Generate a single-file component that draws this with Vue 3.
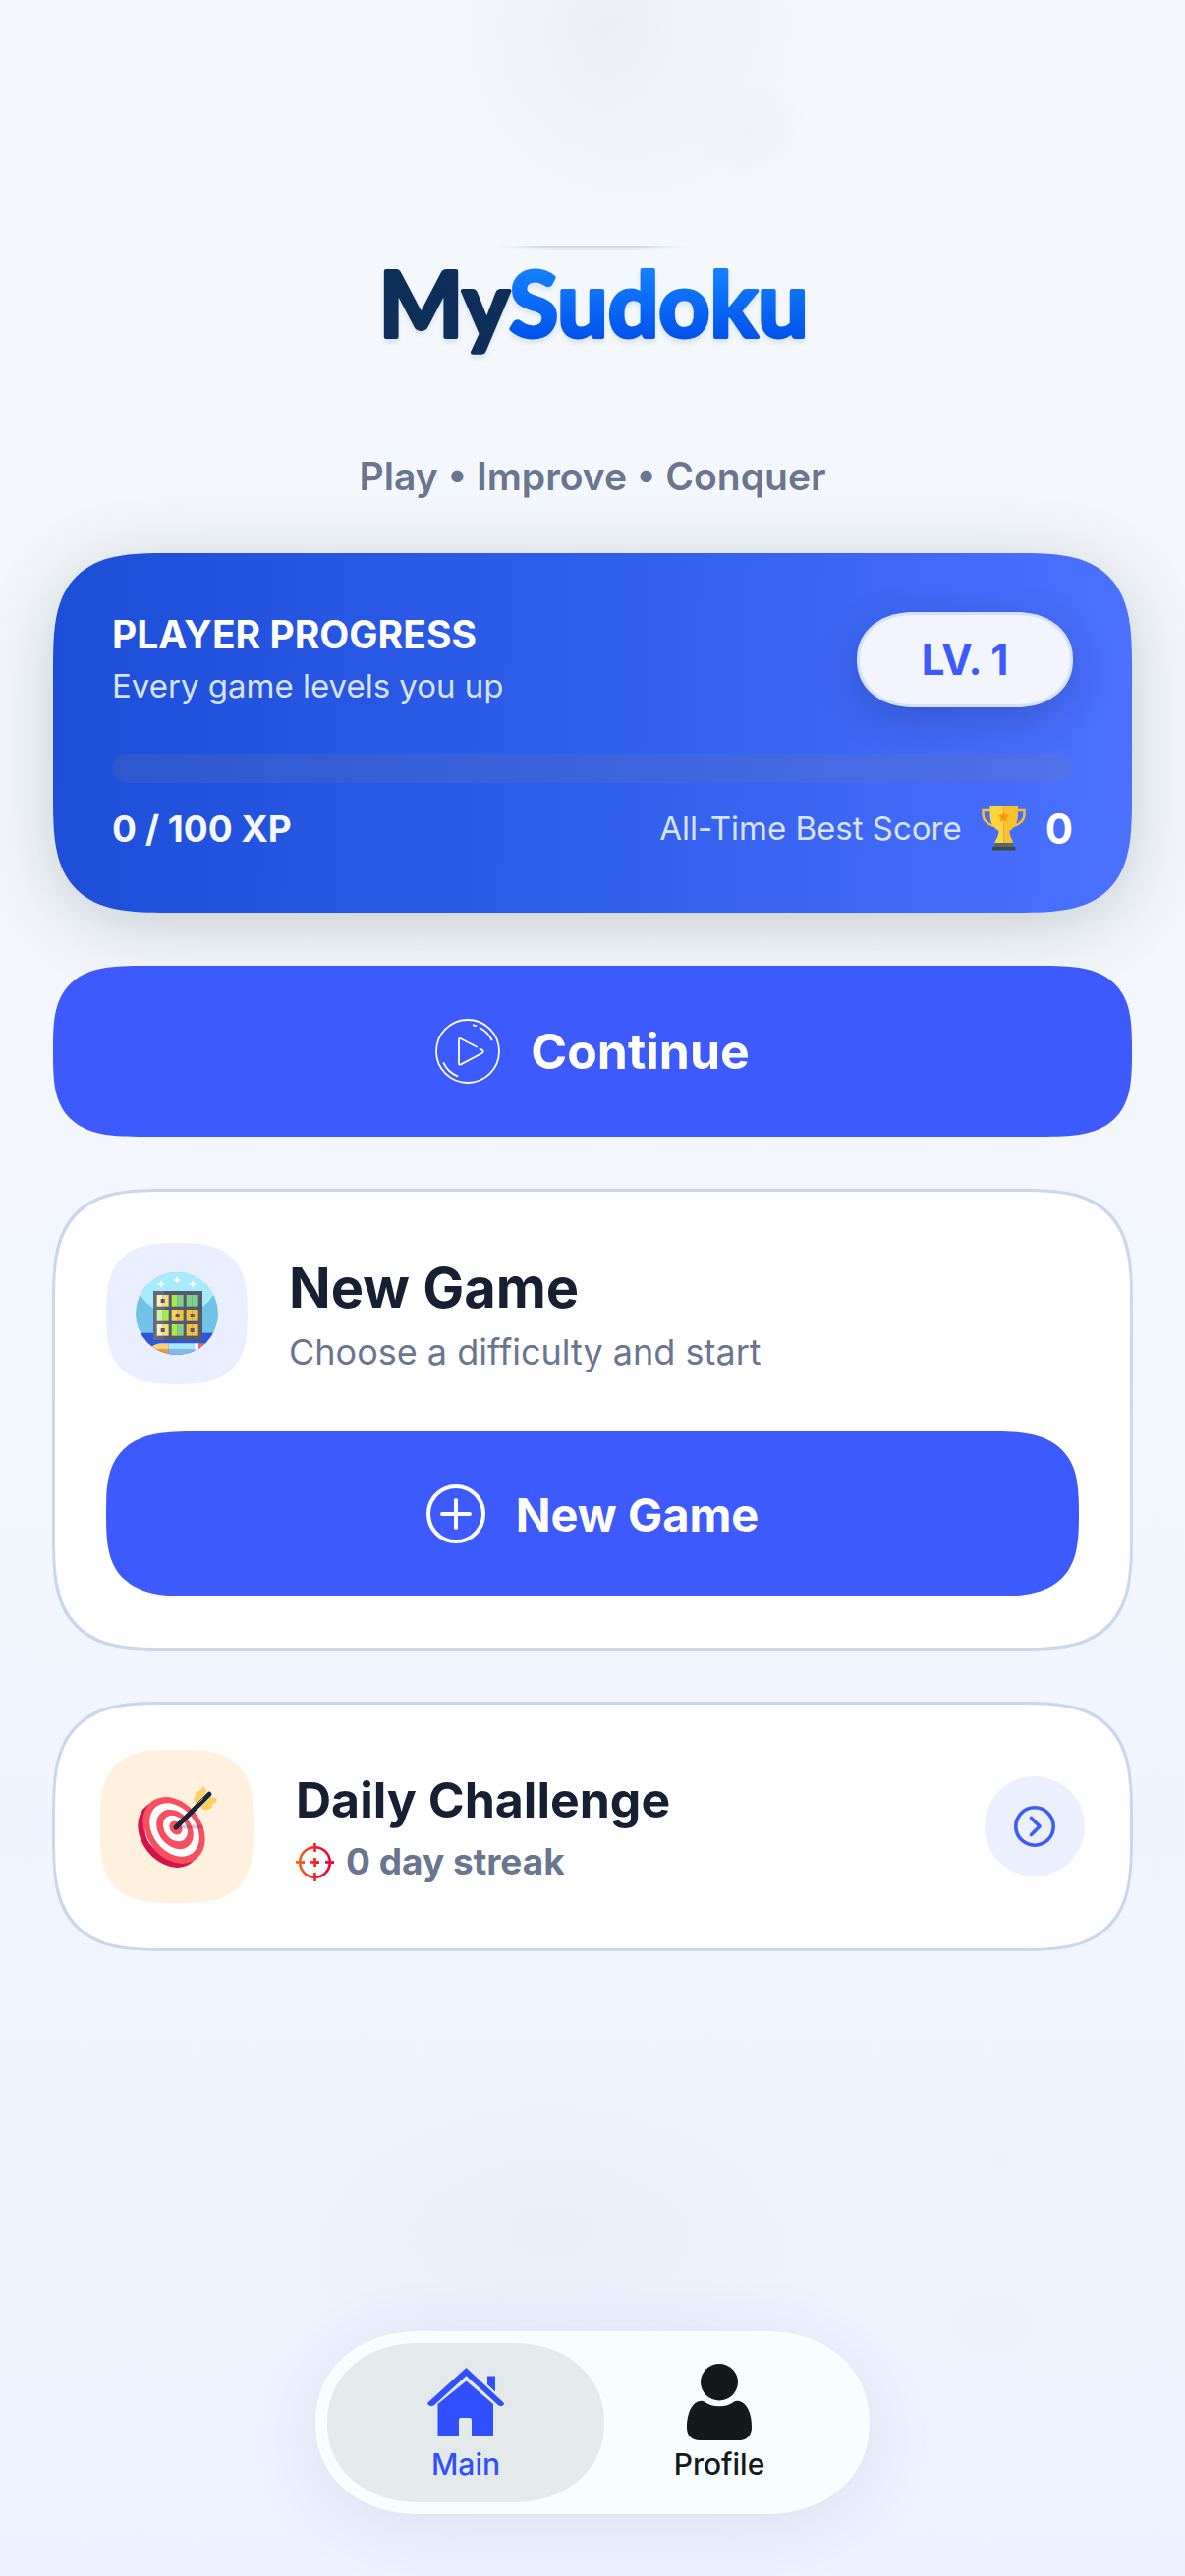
<template>
  <div class="page">
    <header class="hero">
      <h1 class="logo">
        <svg viewBox="0 0 520 166" width="520" height="166" role="img" aria-label="MySudoku">
          <defs>
            <linearGradient id="logo-blue" x1="0" y1="0" x2="0" y2="1">
              <stop offset="0.2" stop-color="#1480ff" />
              <stop offset="0.85" stop-color="#0052ea" />
            </linearGradient>
            <linearGradient id="line-fade" x1="0" y1="0" x2="1" y2="0">
              <stop offset="0" stop-color="#c3cfdc" stop-opacity="0" />
              <stop offset="0.25" stop-color="#c3cfdc" stop-opacity="0.7" />
              <stop offset="0.75" stop-color="#c3cfdc" stop-opacity="0.7" />
              <stop offset="1" stop-color="#c3cfdc" stop-opacity="0" />
            </linearGradient>
          </defs>
          <rect x="164" y="10" width="192" height="2" fill="url(#line-fade)" />
          <rect x="176" y="12" width="168" height="2" fill="url(#line-fade)" opacity="0.4" />
          <text class="logo-text" x="261" y="103" text-anchor="middle">
            <tspan class="logo-my">My</tspan><tspan class="logo-sudoku">Sudoku</tspan>
          </text>
        </svg>
      </h1>
      <p class="tagline">Play • Improve • Conquer</p>
    </header>

    <main class="content">
      <section class="progress-card">
        <div class="progress-head">
          <div>
            <h2 class="progress-title">PLAYER PROGRESS</h2>
            <p class="progress-sub">Every game levels you up</p>
          </div>
          <span class="level">LV. {{ player.level }}</span>
        </div>
        <div
          class="bar"
          role="progressbar"
          aria-label="XP"
          :aria-valuenow="player.xp"
          aria-valuemin="0"
          :aria-valuemax="player.xpGoal"
        >
          <div class="bar-fill" :style="{ width: xpPercent + '%' }"></div>
        </div>
        <div class="progress-foot">
          <span class="xp">{{ player.xp }} / {{ player.xpGoal }} XP</span>
          <div class="best">
            <span class="best-label">All-Time Best Score</span>
            <svg class="trophy" viewBox="0 0 45 46" aria-hidden="true">
              <path d="M9 4H1.500v5c0 6 5 10.500 11 12M36 4h7.500v5c0 6-5 10.500-11 12" fill="none" stroke="#fbc02d" stroke-width="2.400" />
              <path d="M8.500 0h14v38h-9c0-3 4-6 4-12-5-3-9-8-9-16z" fill="#fdd63c" />
              <path d="M22.500 0H37v10c0 8-4 13-8.500 16 0 6 3.500 9 3.500 12h-9.500z" fill="#fbc02d" />
              <path d="M22.500 6l1.700 3.500 3.800.5-2.800 2.700.8 4-3.500-1.900-3.500 1.900.8-4L17 10l3.800-.5z" fill="#ff9800" />
              <path d="M13.500 38H32v4H13.500z" fill="#5b6569" />
              <path d="M11 42h23.500v3.500H11z" fill="#3d4649" />
            </svg>
            <strong class="best-value">{{ player.best }}</strong>
          </div>
        </div>
      </section>

      <button class="primary continue" type="button">
        <svg class="icon-play" viewBox="0 0 66 66" aria-hidden="true">
          <g fill="none" stroke="#fff" stroke-width="1.800" stroke-linecap="round" stroke-linejoin="round">
            <circle cx="33" cy="33" r="32" />
            <path d="M42 28.500L26 20.200q-2-1-2 1.300v23.600q0 2.300 2 1.300L47.500 35q2.400-1.700 0-3.400L45.500 30.800" />
            <path d="M45.500 9.200A27 27 0 0 1 57.500 21.500M38.700 6.400l2.600.7M8.500 45A27 27 0 0 0 22.500 58.300" />
          </g>
        </svg>
        <span>Continue</span>
      </button>

      <section class="card new-game">
        <div class="card-head">
          <div class="tile tile-blue">
            <svg class="icon-board" viewBox="0 0 252 252" aria-hidden="true">
              <defs>
                <clipPath id="board-clip"><circle cx="126" cy="126" r="126" /></clipPath>
              </defs>
              <g clip-path="url(#board-clip)">
                <rect width="252" height="252" fill="#70c2e7" />
                <circle cx="126" cy="0" r="131" fill="#a9ebfe" />
                <rect y="185" width="252" height="67" fill="#2d56da" />
                <path d="M48 228q14-11 30-11h22v17H40z" fill="#fbd27c" />
                <path d="M40 234h60v18H60z" fill="#ef9838" />
                <path d="M100 217h82v17h-82z" fill="#a9ebfe" />
                <path d="M100 234h82v18h-82z" fill="#86b6ea" />
                <path d="M181 217h11v35h-11z" fill="#fff" />
                <path d="M192 217h25v35h-25z" fill="#f2606e" />
                <rect x="54" y="57" width="150" height="150" fill="#545a6b" />
                <path d="M54 57h34v150H54z" fill="#65697f" />
                <g v-for="cell in boardCells" :key="cell.id">
                  <rect :x="cell.x" :y="cell.y" width="18" height="35" :fill="cell.left" />
                  <rect :x="cell.x + 18" :y="cell.y" width="18" height="35" :fill="cell.right" />
                  <rect v-if="cell.dot" :x="cell.x + 12" :y="cell.y + 12" width="12" height="12" fill="#545a6b" />
                </g>
                <path d="M75 27h6v6h6v6h-6v6h-6v-6h-6v-6h6zM123 15h6v6h6v6h-6v6h-6v-6h-6v-6h6zM171 27h6v6h6v6h-6v6h-6v-6h-6v-6h6z" fill="#fff" />
              </g>
            </svg>
          </div>
          <div>
            <h2 class="new-title">New Game</h2>
            <p class="new-sub">Choose a difficulty and start</p>
          </div>
        </div>
        <button class="primary start" type="button">
          <svg class="icon-plus" viewBox="0 0 60 60" aria-hidden="true">
            <g fill="none" stroke="#fff" stroke-width="4" stroke-linecap="round">
              <circle cx="30" cy="30" r="28" />
              <path d="M30 16v28M16 30h28" />
            </g>
          </svg>
          <span>New Game</span>
        </button>
      </section>

      <section class="card daily">
        <div class="tile tile-cream">
          <svg class="icon-target" viewBox="0 0 84 84" aria-hidden="true">
            <ellipse cx="34" cy="50" rx="28" ry="37" transform="rotate(-38 34 50)" fill="#d3134a" />
            <ellipse cx="39" cy="46" rx="28" ry="37" transform="rotate(-38 39 46)" fill="#f74f5f" />
            <ellipse cx="39.500" cy="45.500" rx="22" ry="30" transform="rotate(-38 39.500 45.500)" fill="#fff" />
            <ellipse cx="40" cy="45" rx="16.500" ry="22" transform="rotate(-38 40 45)" fill="#f74f5f" />
            <ellipse cx="40.500" cy="44" rx="11" ry="14.500" transform="rotate(-38 40.500 44)" fill="#fff" />
            <ellipse cx="41" cy="43.500" rx="6" ry="7.500" transform="rotate(-38 41 43.500)" fill="#f74f5f" />
            <path d="M42 42l5-1.500h22v4H44z" fill="#5a3060" opacity="0.25" />
            <path d="M10 43c0 8 3 15 9 21-6-4-10-12-9-21z" fill="#fff" />
            <path d="M69.500.7l2.600 6L62 20l-3.400-7 2-1 .6-5 3.500-1z" fill="#fdd063" />
            <path d="M76.500 12l6 1.500-.5 4-3.500 1.500-.5 4-6.500 2.700-6.500-3.200z" fill="#fdd063" />
            <path d="M41 43L75 9.200" stroke="#1b2439" stroke-width="5" stroke-linecap="round" />
            <path d="M64 18l4.500-4.500" stroke="#cfd5e2" stroke-width="0.800" stroke-linecap="round" />
          </svg>
        </div>
        <div class="daily-text">
          <h2 class="daily-title">Daily Challenge</h2>
          <p class="streak">
            <svg class="icon-aim" viewBox="0 0 39 39" aria-hidden="true">
              <defs>
                <linearGradient id="aim" x1="0" y1="0" x2="39" y2="0" gradientUnits="userSpaceOnUse">
                  <stop offset="0.1" stop-color="#ff5a14" />
                  <stop offset="0.6" stop-color="#fb0a2c" />
                  <stop offset="1" stop-color="#f20034" />
                </linearGradient>
              </defs>
              <g fill="none" stroke="url(#aim)" stroke-width="2.600">
                <circle cx="19.500" cy="19.500" r="15.300" />
                <path d="M19.400 0l.2 9M19.400 30l.2 9M0 19.400l9 .2M30 19.400l9 .2M15 19.400l9 .2M19.400 15l.2 9" />
              </g>
            </svg>
            <span>{{ player.streak }} day streak</span>
          </p>
        </div>
        <button class="go" type="button" aria-label="Open daily challenge">
          <svg viewBox="0 0 42 42" width="42" height="42" aria-hidden="true">
            <g fill="none" stroke="#3d5afe" stroke-width="3.600" stroke-linecap="round" stroke-linejoin="round">
              <circle cx="21" cy="21" r="19.200" />
              <path d="M17.500 12.500L26 21l-8.500 8.500" />
            </g>
          </svg>
        </button>
      </section>
    </main>

    <nav class="tabs">
      <a class="tab active" href="#main" aria-current="page">
        <svg viewBox="0 0 78 78" width="78" height="78" aria-hidden="true">
          <g fill="currentColor">
            <path d="M39.500 4L77 39q2 2-.3 3.500-2.700 1.200-4.700-.4L39.500 12.300 7 42.100q-2 1.600-5 .4-3-1.500-1-3.500z" />
            <path d="M61 12.500h8v16L61 21z" />
            <path d="M39.500 17.500L67 41v31q0 1.500-1.500 1.500H45V57q0-2-2-2h-9q-2 0-2 2v16.500H12q-1.500 0-1.500-1.500V41z" />
          </g>
        </svg>
        <span>Main</span>
      </a>
      <a class="tab" href="#profile">
        <svg viewBox="0 0 66 78" width="66" height="78" aria-hidden="true">
          <g fill="currentColor">
            <ellipse cx="33" cy="18.700" rx="19" ry="18.700" />
            <path d="M15 37.700c4 0 6 5.600 18 5.600s14-5.600 18-5.600c9 0 15 11 15 27 0 8-5 13.300-13 13.300H13C5 78 0 73 0 65c0-16 6-27.300 15-27.300z" />
          </g>
        </svg>
        <span>Profile</span>
      </a>
    </nav>
  </div>
</template>

<script setup>
import { computed, ref } from 'vue'

const player = ref({ level: 1, xp: 0, xpGoal: 100, best: 0, streak: 0 })

const xpPercent = computed(() => (player.value.xp / player.value.xpGoal) * 100)

const cellColors = {
  cream: ['#fdf0b8', '#fbd77e'],
  gold: ['#fbd25f', '#f0c040'],
  amber: ['#f0c040', '#f0c040'],
  lime: ['#a4ea4c', '#7fd08e'],
  mint: ['#cdf3a4', '#a4ea4c'],
  green: ['#7fd08e', '#7fd08e']
}

// numbered cells carry a dot
const board = [
  ['cream', 'lime', 'green'],
  ['mint', 'gold', 'amber'],
  ['cream', 'lime', 'amber']
]
const dotted = ['cream', 'gold', 'amber']

const boardCells = board.flatMap((row, r) =>
  row.map((kind, c) => ({
    id: r + '-' + c,
    x: 65 + c * 45,
    y: 69 + r * 45,
    left: cellColors[kind][0],
    right: cellColors[kind][1],
    dot: dotted.includes(kind)
  }))
)
</script>

<style>
body {
  margin: 0;
  background: #f0f4fe;
}
</style>

<style scoped>
.page {
  display: flex;
  flex-direction: column;
  box-sizing: border-box;
  min-height: 100vh;
  padding: 240px 54px 63px;
  font-family: Inter, "Liberation Sans", sans-serif;
  color: #172033;
  background:
    radial-gradient(ellipse 80px 130px at 610px 30px, rgba(120, 120, 130, 0.03), transparent),
    radial-gradient(ellipse 210px 220px at 640px 20px, rgba(130, 125, 130, 0.05), transparent),
    radial-gradient(ellipse 60px 50px at 765px 135px, rgba(120, 120, 130, 0.03), transparent),
    radial-gradient(ellipse 320px 200px at 560px 2270px, rgba(120, 130, 145, 0.05), transparent),
    radial-gradient(ellipse 70px 60px at 1020px 2200px, rgba(120, 125, 150, 0.02), transparent),
    radial-gradient(ellipse 80px 60px at 1010px 2360px, rgba(120, 125, 150, 0.02), transparent),
    linear-gradient(180deg, #f4f8fc 0%, #f3f7fd 45%, #f0f5fe 78%, #eef2ff 100%);
}

h1,
h2,
p {
  margin: 0;
}

svg {
  display: block;
  flex: none;
}

button {
  border: none;
  padding: 0;
  font-family: inherit;
  cursor: pointer;
}

.hero {
  display: flex;
  flex-direction: column;
  align-items: center;
}

.logo-text {
  font-family: Lato, "Open Sans", sans-serif;
  font-size: 91px;
  font-weight: 700;
  stroke-width: 4px;
  stroke-linejoin: round;
  filter: drop-shadow(0 4px 2px rgba(30, 60, 110, 0.1));
}

.logo-my {
  fill: #0d2f5a;
  stroke: #0d2f5a;
}

.logo-sudoku {
  fill: url(#logo-blue);
  stroke: url(#logo-blue);
}

.tagline {
  margin-top: 55px;
  font-size: 39px;
  line-height: 48px;
  font-weight: 600;
  color: #6a758f;
}

.content {
  display: flex;
  flex-direction: column;
  gap: 54px;
  padding: 54px 0;
}

.progress-card {
  padding: 60px 60px 62px;
  border-radius: 84px;
  color: #fff;
  background: linear-gradient(92deg, #1d4ed8 0%, #2f5eeb 50%, #4c71ff 100%);
  box-shadow: 0 12px 72px rgba(10, 20, 15, 0.19);
}

.progress-head {
  display: flex;
  justify-content: space-between;
  align-items: flex-start;
}

.progress-title {
  font-size: 39px;
  line-height: 46px;
  font-weight: 700;
}

.progress-sub {
  margin-top: 6px;
  font-size: 33px;
  line-height: 46px;
  color: #d8e2fc;
}

.level {
  box-sizing: border-box;
  min-width: 220px;
  padding: 0 56px;
  border: 3px solid #d6e1fc;
  border-radius: 48px;
  text-align: center;
  font-size: 42px;
  line-height: 91px;
  font-weight: 700;
  color: #3d5afe;
  background: #f2f5fd;
  box-shadow: 0 12px 42px rgba(20, 30, 80, 0.24);
}

.bar {
  height: 30px;
  margin-top: 46px;
  overflow: hidden;
  border-radius: 15px;
  background: rgba(110, 125, 160, 0.2);
}

.bar-fill {
  height: 100%;
  border-radius: 15px;
  background: #fff;
}

.progress-foot {
  display: flex;
  justify-content: space-between;
  align-items: center;
  height: 48px;
  margin-top: 22px;
}

.xp {
  font-size: 37px;
  font-weight: 700;
  color: #f4f7ff;
}

.best {
  display: flex;
  align-items: center;
  gap: 20px;
}

.best-label {
  font-size: 33px;
  color: #d8e2fc;
}

.trophy {
  width: 45px;
  height: 46px;
}

.best-value {
  font-size: 42px;
  font-weight: 700;
}

.primary {
  display: flex;
  align-items: center;
  justify-content: center;
  width: 100%;
  font-weight: 700;
  color: #fff;
  background: #3d5afe;
}

.continue {
  gap: 31px;
  height: 174px;
  border-radius: 72px;
  font-size: 50px;
}

.start {
  gap: 31px;
  height: 168px;
  margin-top: 48px;
  border-radius: 66px;
  font-size: 47px;
}

.icon-play {
  width: 66px;
  height: 66px;
}

.icon-plus {
  width: 60px;
  height: 60px;
}

.card {
  border: 2px solid #ccd7ec;
  border-radius: 84px;
  background: #fff;
  box-shadow: 0 0 0 1px #ccd7ec;
}

.new-game {
  padding: 52px;
}

.card-head {
  display: flex;
  align-items: center;
  gap: 42px;
}

.tile {
  display: flex;
  flex: none;
  align-items: center;
  justify-content: center;
  border-radius: 54px;
}

.tile-blue {
  width: 144px;
  height: 144px;
  background: #e9effe;
}

.tile-cream {
  width: 156px;
  height: 156px;
  background: #fff1dd;
}

.icon-board,
.icon-target {
  width: 84px;
  height: 84px;
}

.new-title {
  font-size: 56px;
  line-height: 68px;
  font-weight: 700;
}

.new-sub {
  margin-top: 9px;
  font-size: 36px;
  line-height: 44px;
  color: #6a758f;
}

.daily {
  display: flex;
  align-items: center;
  gap: 43px;
  padding: 46px;
}

.daily-text {
  flex: 1;
}

.daily-title {
  font-size: 50px;
  line-height: 62px;
  font-weight: 700;
}

.streak {
  display: flex;
  align-items: center;
  gap: 12px;
  margin-top: 10px;
  font-size: 37px;
  line-height: 44px;
  font-weight: 700;
  color: #6a758f;
}

.icon-aim {
  width: 39px;
  height: 39px;
}

.go {
  display: flex;
  flex: none;
  align-items: center;
  justify-content: center;
  width: 102px;
  height: 102px;
  border-radius: 50%;
  background: #ecf0fe;
}

.tabs {
  display: flex;
  align-self: center;
  margin-top: auto;
  padding: 12px;
  border-radius: 93px;
  background: #f8fdff;
  box-shadow: 0 12px 72px rgba(60, 60, 100, 0.11);
}

.tab {
  display: flex;
  flex-direction: column;
  align-items: center;
  gap: 6px;
  box-sizing: border-box;
  width: 282px;
  height: 162px;
  padding-top: 21px;
  border-radius: 81px;
  font-size: 30px;
  line-height: 36px;
  font-weight: 500;
  color: #14191c;
  text-decoration: none;
}

.tab + .tab {
  margin-left: -24px;
}

.tab.active {
  color: #304ffe;
  background: #e4e9ec;
}

/* smooth continuous corners where the browser knows them */
@supports (corner-shape: squircle) {
  .progress-card,
  .card {
    border-radius: 116px;
    corner-shape: superellipse(1.6);
  }

  .continue,
  .start {
    border-radius: 92px / 84px;
    corner-shape: superellipse(1.6);
  }

  .tile {
    border-radius: 72px;
    corner-shape: superellipse(1.5);
  }

  .level {
    border-radius: 58px / 48px;
    corner-shape: superellipse(1.1);
  }

  .tabs {
    border-radius: 106px / 93px;
    corner-shape: superellipse(1.1);
  }

  .tab {
    border-radius: 94px / 81px;
    corner-shape: superellipse(1.1);
  }
}
</style>
